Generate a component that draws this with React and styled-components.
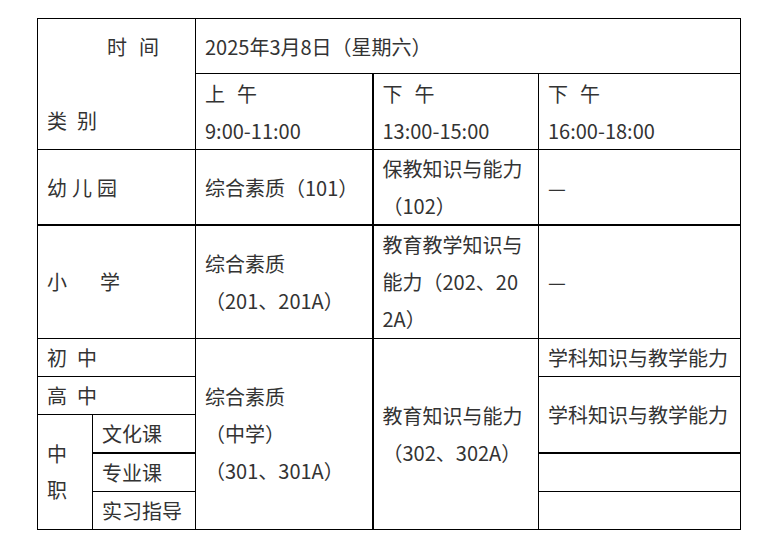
import React from 'react';
import styled, { createGlobalStyle } from 'styled-components';

const GlobalStyle = createGlobalStyle`
  html, body {
    margin: 0;
    padding: 0;
    background: #fff;
  }
  body {
    font-family: "Noto Sans CJK SC", "Noto Sans", sans-serif;
  }
`;

const Page = styled.div`
  padding: 18px 0 0 37px;
`;

const Schedule = styled.table`
  border-collapse: collapse;
  table-layout: fixed;
  width: 703px;
  color: #333;
  font-size: 20px;
  line-height: 37px;
`;

const Row = styled.tr`
  height: ${(p) => p.$h}px;
`;

const Cell = styled.td`
  border: 1px solid #000;
  border-left-width: ${(p) => (p.$thickLeft ? 2 : 1)}px;
  border-top-width: ${(p) => (p.$thickTop ? 2 : 1)}px;
  padding: 0 8px 0 9px;
  vertical-align: middle;
  white-space: nowrap;
  text-align: left;
`;

const CornerCell = styled(Cell)`
  padding: 0;
  vertical-align: top;
`;

const Corner = styled.div`
  display: flex;
  flex-direction: column;
  justify-content: space-between;
  height: 130px;
  padding: 9px 0 10px 9px;
  box-sizing: border-box;
`;

const CornerTop = styled.div`
  padding-left: 60px;
`;

const Spread = styled.span`
  letter-spacing: ${(p) => p.$gap}px;
`;

const Vertical = styled.div`
  line-height: 36px;
`;

const times = [
  { label: '上午', range: '9:00-11:00' },
  { label: '下午', range: '13:00-15:00' },
  { label: '下午', range: '16:00-18:00' },
];

export default function App() {
  return (
    <Page>
      <GlobalStyle />
      <Schedule>
        <colgroup>
          <col style={{ width: 55 }} />
          <col style={{ width: 103 }} />
          <col style={{ width: 177 }} />
          <col style={{ width: 166 }} />
          <col style={{ width: 202 }} />
        </colgroup>
        <tbody>
          <Row $h={55}>
            <CornerCell colSpan={2} rowSpan={2}>
              <Corner>
                <CornerTop>
                  <Spread $gap={12}>时间</Spread>
                </CornerTop>
                <div>
                  <Spread $gap={10}>类别</Spread>
                </div>
              </Corner>
            </CornerCell>
            <Cell colSpan={3}>2025年3月8日（星期六）</Cell>
          </Row>
          <Row $h={75}>
            {times.map((t, i) => (
              <Cell key={i} $thickLeft={i === 1}>
                <Spread $gap={12}>{t.label}</Spread>
                <br />
                {t.range}
              </Cell>
            ))}
          </Row>
          <Row $h={74}>
            <Cell colSpan={2}>
              <Spread $gap={5}>幼儿园</Spread>
            </Cell>
            <Cell>综合素质（101）</Cell>
            <Cell $thickLeft>
              保教知识与能力
              <br />
              （102）
            </Cell>
            <Cell>—</Cell>
          </Row>
          <Row $h={113}>
            <Cell colSpan={2} $thickTop>
              <Spread $gap={33}>小学</Spread>
            </Cell>
            <Cell $thickTop>
              综合素质
              <br />
              （201、201A）
            </Cell>
            <Cell $thickTop $thickLeft>
              教育教学知识与
              <br />
              能力（202、20
              <br />
              2A）
            </Cell>
            <Cell $thickTop>—</Cell>
          </Row>
          <Row $h={38}>
            <Cell colSpan={2}>
              <Spread $gap={10}>初中</Spread>
            </Cell>
            <Cell rowSpan={5}>
              综合素质
              <br />
              （中学）
              <br />
              （301、301A）
            </Cell>
            <Cell rowSpan={5} $thickLeft>
              教育知识与能力
              <br />
              （302、302A）
            </Cell>
            <Cell>学科知识与教学能力</Cell>
          </Row>
          <Row $h={38}>
            <Cell colSpan={2}>
              <Spread $gap={10}>高中</Spread>
            </Cell>
            <Cell rowSpan={2}>学科知识与教学能力</Cell>
          </Row>
          <Row $h={39}>
            <Cell rowSpan={3}>
              <Vertical>
                中
                <br />
                职
              </Vertical>
            </Cell>
            <Cell>文化课</Cell>
          </Row>
          <Row $h={38}>
            <Cell $thickTop>专业课</Cell>
            <Cell $thickTop />
          </Row>
          <Row $h={38}>
            <Cell>实习指导</Cell>
            <Cell />
          </Row>
        </tbody>
      </Schedule>
    </Page>
  );
}
